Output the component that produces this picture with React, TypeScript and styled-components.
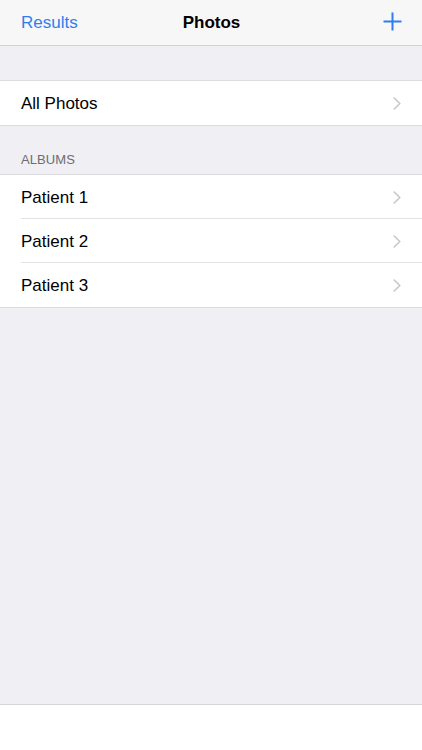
import React from "react";
import styled, { createGlobalStyle } from "styled-components";

const Global = createGlobalStyle`
  html, body { margin: 0; padding: 0; }
  body {
    font-family: "Liberation Sans", Arial, sans-serif;
    background: #efeff4;
    -webkit-font-smoothing: antialiased;
  }
`;

const Screen = styled.div`
  display: flex;
  flex-direction: column;
  min-height: 750px;
  background: #efeff4;
`;

const NavBar = styled.header`
  height: 45px;
  display: grid;
  grid-template-columns: 1fr auto 1fr;
  align-items: center;
  padding: 0 20px 0 21px;
  background: #f7f7f8;
  border-bottom: 1px solid #d2d2d6;
`;

const NavButton = styled.span`
  font-size: 17px;
  color: #2f7ef0;
  justify-self: start;
`;

const NavTitle = styled.h1`
  margin: 0;
  font-size: 17px;
  font-weight: 700;
  color: #000;
`;

const NavIcon = styled.span`
  justify-self: end;
  display: flex;
  align-items: center;
  color: #2f7ef0;
  margin-top: -2px;
`;

const Main = styled.main`
  flex: 1;
  display: flex;
  flex-direction: column;
  padding-top: 34px;
`;

const Group = styled.section`
  background: #fff;
  border-top: 1px solid #dcdce0;
  border-bottom: 1px solid #dcdce0;
`;

const SectionHeader = styled.div`
  height: 48px;
  box-sizing: border-box;
  display: flex;
  align-items: flex-end;
  padding: 0 21px 7px;
  font-size: 13px;
  color: #6d6d72;
  letter-spacing: 0.1px;
`;

const Row = styled.div`
  height: 44px;
  display: flex;
  padding-left: 21px;
`;

const RowInner = styled.div<{ $last?: boolean }>`
  flex: 1;
  display: flex;
  align-items: center;
  justify-content: space-between;
  padding-right: 21px;
  box-sizing: border-box;
  border-bottom: ${(p) => (p.$last ? "none" : "1px solid #e3e3e6")};
`;

const RowLabel = styled.span`
  font-size: 17px;
  color: #000;
  padding-top: 2px;
`;

const Chevron = styled.svg`
  width: 8px;
  height: 13px;
  margin-top: 1px;
`;

const Toolbar = styled.footer`
  height: 45px;
  background: #fff;
  border-top: 1px solid #d3d3d8;
`;

const ChevronIcon = () => (
  <Chevron viewBox="0 0 8 13">
    <path d="M1.2 1 L6.8 6.5 L1.2 12" fill="none" stroke="#c7c7cc" strokeWidth="1.6" strokeLinecap="round" strokeLinejoin="round" />
  </Chevron>
);

const ListRow = ({ label, last }: { label: string; last?: boolean }) => (
  <Row>
    <RowInner $last={last}>
      <RowLabel>{label}</RowLabel>
      <ChevronIcon />
    </RowInner>
  </Row>
);

export default function App() {
  return (
    <Screen>
      <Global />
      <NavBar>
        <NavButton>Results</NavButton>
        <NavTitle>Photos</NavTitle>
        <NavIcon>
          <svg width="19" height="19" viewBox="0 0 19 19">
            <path d="M9.5 0.5 V18.5 M0.5 9.5 H18.5" stroke="currentColor" strokeWidth="2" fill="none" />
          </svg>
        </NavIcon>
      </NavBar>
      <Main>
        <Group>
          <ListRow label="All Photos" last />
        </Group>
        <SectionHeader>ALBUMS</SectionHeader>
        <Group>
          <ListRow label="Patient 1" />
          <ListRow label="Patient 2" />
          <ListRow label="Patient 3" last />
        </Group>
      </Main>
      <Toolbar />
    </Screen>
  );
}
